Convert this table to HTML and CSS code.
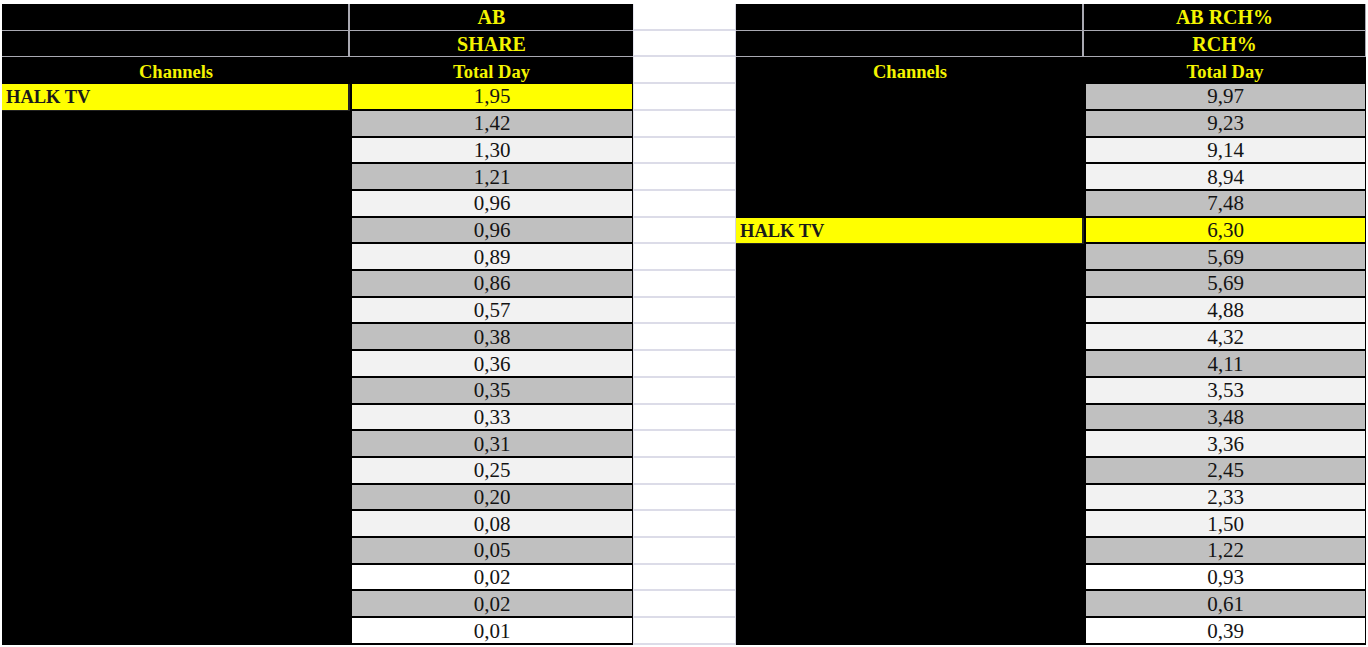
FILE: index.html
```html
<!DOCTYPE html>
<html>
<head>
<meta charset="utf-8">
<link rel="stylesheet" href="styles.css">
</head>
<body>
<div class="sheet">
  <div class="tbl left">
    <div class="c hd k"></div><div class="c hd v">AB</div>
    <div class="c hd k"></div><div class="c hd v">SHARE</div>
    <div class="c sub">Channels</div><div class="c sub">Total Day</div>
    <div class="c name hl">HALK TV</div><div class="c val y">1,95</div>
    <div class="c name"></div><div class="c val g">1,42</div>
    <div class="c name"></div><div class="c val l">1,30</div>
    <div class="c name"></div><div class="c val g">1,21</div>
    <div class="c name"></div><div class="c val l">0,96</div>
    <div class="c name"></div><div class="c val g">0,96</div>
    <div class="c name"></div><div class="c val l">0,89</div>
    <div class="c name"></div><div class="c val g">0,86</div>
    <div class="c name"></div><div class="c val l">0,57</div>
    <div class="c name"></div><div class="c val g">0,38</div>
    <div class="c name"></div><div class="c val l">0,36</div>
    <div class="c name"></div><div class="c val g">0,35</div>
    <div class="c name"></div><div class="c val l">0,33</div>
    <div class="c name"></div><div class="c val g">0,31</div>
    <div class="c name"></div><div class="c val l">0,25</div>
    <div class="c name"></div><div class="c val g">0,20</div>
    <div class="c name"></div><div class="c val l">0,08</div>
    <div class="c name"></div><div class="c val g">0,05</div>
    <div class="c name"></div><div class="c val w">0,02</div>
    <div class="c name"></div><div class="c val g">0,02</div>
    <div class="c name"></div><div class="c val w">0,01</div>
  </div>
  <div class="gapcol">
    <div class="gc"></div><div class="gc"></div><div class="gc"></div><div class="gc"></div>
    <div class="gc"></div><div class="gc"></div><div class="gc"></div><div class="gc"></div>
    <div class="gc"></div><div class="gc"></div><div class="gc"></div><div class="gc"></div>
    <div class="gc"></div><div class="gc"></div><div class="gc"></div><div class="gc"></div>
    <div class="gc"></div><div class="gc"></div><div class="gc"></div><div class="gc"></div>
    <div class="gc"></div><div class="gc"></div><div class="gc"></div><div class="gc"></div>
  </div>
  <div class="tbl right">
    <div class="c hd k"></div><div class="c hd v">AB RCH%</div>
    <div class="c hd k"></div><div class="c hd v">RCH%</div>
    <div class="c sub">Channels</div><div class="c sub">Total Day</div>
    <div class="c name"></div><div class="c val g">9,97</div>
    <div class="c name"></div><div class="c val g">9,23</div>
    <div class="c name"></div><div class="c val l">9,14</div>
    <div class="c name"></div><div class="c val l">8,94</div>
    <div class="c name"></div><div class="c val g">7,48</div>
    <div class="c name hl">HALK TV</div><div class="c val y">6,30</div>
    <div class="c name"></div><div class="c val g">5,69</div>
    <div class="c name"></div><div class="c val g">5,69</div>
    <div class="c name"></div><div class="c val l">4,88</div>
    <div class="c name"></div><div class="c val l">4,32</div>
    <div class="c name"></div><div class="c val g">4,11</div>
    <div class="c name"></div><div class="c val l">3,53</div>
    <div class="c name"></div><div class="c val g">3,48</div>
    <div class="c name"></div><div class="c val l">3,36</div>
    <div class="c name"></div><div class="c val g">2,45</div>
    <div class="c name"></div><div class="c val l">2,33</div>
    <div class="c name"></div><div class="c val l">1,50</div>
    <div class="c name"></div><div class="c val g">1,22</div>
    <div class="c name"></div><div class="c val w">0,93</div>
    <div class="c name"></div><div class="c val g">0,61</div>
    <div class="c name"></div><div class="c val w">0,39</div>
  </div>
</div>
</body>
</html>
```

FILE: styles.css
```css
html, body {
  margin: 0;
  padding: 0;
  background: #ffffff;
}
body {
  font-family: "Liberation Serif", "Times New Roman", serif;
  width: 1368px;
  height: 647px;
  overflow: hidden;
}
.sheet {
  display: flex;
  padding: 4px 0 0 2px;
}
.tbl {
  display: grid;
  grid-auto-rows: 26.71px;
  background: #000;
}
.left {
  grid-template-columns: 348px 283px;
}
.right {
  grid-template-columns: 348px 282px;
}
.gapcol {
  display: grid;
  grid-auto-rows: 26.71px;
  width: 103px;
  box-sizing: border-box;
  border-right: 1px solid #d4d4e0;
}
.gc {
  border-bottom: 2px solid #dcdce8;
  border-left: 1px solid #e4e4ee;
}
.c {
  box-sizing: border-box;
  display: flex;
  align-items: center;
  justify-content: center;
  overflow: hidden;
  white-space: nowrap;
}
.hd {
  background: #000;
  color: #f4f400;
  font-size: 20px;
  font-weight: 600;
  border-bottom: 1px solid #a9a9b2;
  padding-top: 1px;
}
.hd.k {
  border-right: 2px solid #a9a9b2;
}
.right .hd.v {
  border-right: 1px solid #a9a9b2;
}
.sub {
  background: #000;
  color: #f4f400;
  font-size: 18.5px;
  font-weight: bold;
  padding-top: 4px;
}
.name {
  background: #000;
  justify-content: flex-start;
  padding-left: 4px;
  padding-top: 2px;
  font-size: 18.5px;
  font-weight: bold;
  color: #1a1a1a;
}
.name.hl {
  background: #ffff00;
  border-right: 2px solid #222;
  border-bottom: 1px solid #222;
}
.val {
  font-size: 21px;
  color: #141414;
  border-left: 2px solid #000;
  border-right: 1px solid #000;
  border-bottom: 2px solid #000;
  padding-top: 1px;
}
.val.y { background: #ffff00; }
.val.g { background: #c0c0c0; }
.val.l { background: #f2f2f2; }
.val.w { background: #ffffff; }
```
